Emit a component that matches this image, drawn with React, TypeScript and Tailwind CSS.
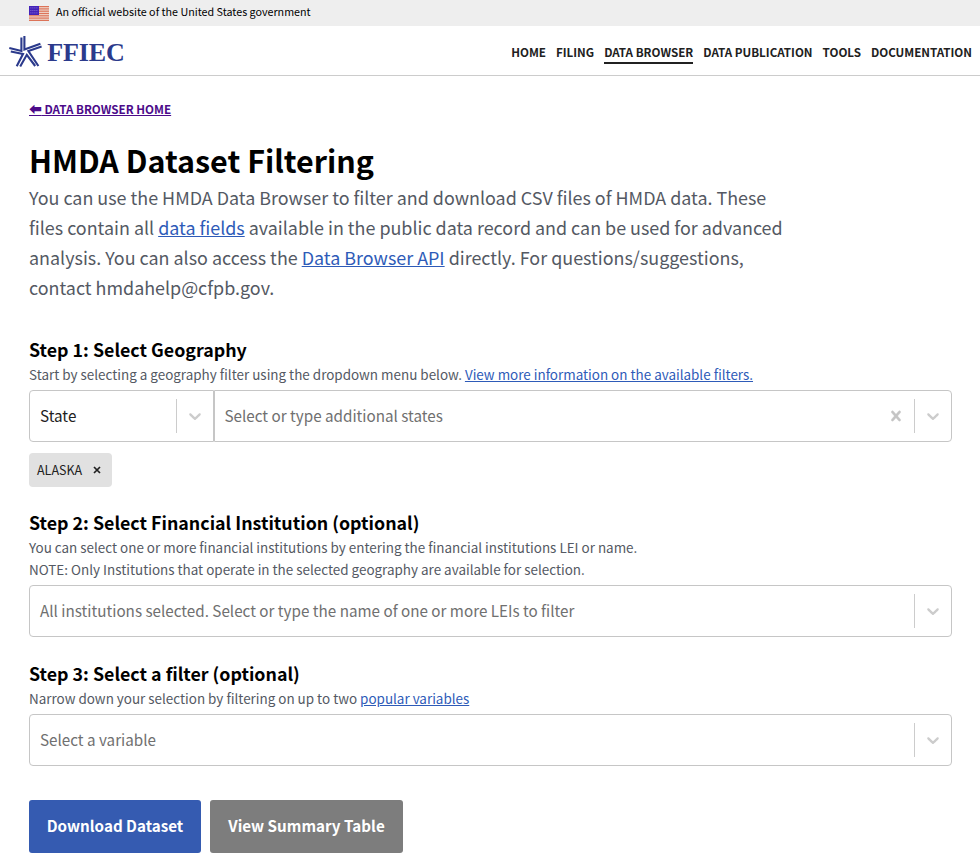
import React from "react";

function Chevron() {
  return (
    <svg width="20" height="20" viewBox="0 0 20 20" fill="#cccccc" aria-hidden="true">
      <path d="M4.516 7.548c0.436-0.446 1.043-0.481 1.576 0l3.908 3.747 3.908-3.747c0.533-0.481 1.141-0.446 1.574 0 0.436 0.445 0.408 1.197 0 1.615-0.406 0.418-4.695 4.502-4.695 4.502-0.217 0.223-0.502 0.335-0.787 0.335s-0.57-0.112-0.789-0.335c0 0-4.287-4.084-4.695-4.502s-0.436-1.17 0-1.615z" />
    </svg>
  );
}

function Clear() {
  return (
    <svg width="20" height="20" viewBox="0 0 20 20" fill="#c4c4c4" stroke="#c4c4c4" strokeWidth="0.4" aria-hidden="true">
      <path d="M14.348 14.849c-0.469 0.469-1.229 0.469-1.697 0l-2.651-3.030-2.651 3.029c-0.469 0.469-1.229 0.469-1.697 0-0.469-0.469-0.469-1.229 0-1.697l2.758-3.15-2.759-3.152c-0.469-0.469-0.469-1.228 0-1.697s1.228-0.469 1.697 0l2.652 3.031 2.651-3.031c0.469-0.469 1.228-0.469 1.697 0s0.469 1.229 0 1.697l-2.758 3.152 2.758 3.15c0.469 0.469 0.469 1.229 0 1.698z" />
    </svg>
  );
}

function Flag() {
  return (
    <svg width="20" height="15" viewBox="0 0 20 15" aria-hidden="true">
      <rect width="20" height="15" fill="#efd9cf" />
      {[0, 2.3, 4.6, 6.9, 9.2, 11.5, 13.8].map((y) => (
        <rect key={y} y={y} width="20" height="1.2" fill="#dc7358" />
      ))}
      <rect width="10" height="9" fill="#4423b8" />
      {[1.5, 4, 6.5].map((y) =>
        [1.5, 3.5, 5.5, 7.5].map((x) => <rect key={`${x}-${y}`} x={x} y={y} width="0.8" height="0.8" fill="#a99be6" />)
      )}
    </svg>
  );
}

function Logo() {
  return (
    <svg width="118" height="35" viewBox="0 0 118 35" aria-label="FFIEC">
      <g fill="none" stroke="#2b3a8c" strokeWidth="2.1">
        <path d="M16.4 3V16.6L32.4 10.8" />
        <path d="M33.6 13.6L20.4 18L30.4 33" />
        <path d="M27.2 33L18.8 21.8L12.2 33.4" />
        <path d="M8.7 33.2L15 21L2.8 18.5" />
        <path d="M1.3 15L13.4 18V4.6" />
      </g>
      <text x="39.3" y="27.5" textLength="77.5" fill="#2b3a8c" className="font-['Liberation_Serif',serif] text-[26px] font-bold">FFIEC</text>
    </svg>
  );
}

interface SelectProps {
  text: string;
  value?: boolean;
  clearable?: boolean;
  className: string;
}

function Select({ text, value, clearable, className }: SelectProps) {
  return (
    <div className={`flex h-[52px] items-center border border-[#c6c6c6] bg-white ${className}`}>
      <span className={`flex-1 pb-0.5 text-[15.22px] leading-6 ${value ? "text-[#212121]" : "text-[#707070]"}`}>{text}</span>
      {clearable && <span className="mr-2"><Clear /></span>}
      <span className="h-[34px] w-px bg-[#cccccc]" />
      <span className="px-2"><Chevron /></span>
    </div>
  );
}

const NAV = ["HOME", "FILING", "DATA BROWSER", "DATA PUBLICATION", "TOOLS", "DOCUMENTATION"];

export default function App() {
  return (
    <div className="h-[865px] w-[980px] overflow-hidden bg-white font-['Noto_Sans_CJK_SC',sans-serif] text-black">
      <div className="flex h-[26px] items-center bg-[#eeeeee] pl-[29px] text-[10.74px]">
        <Flag />
        <span className="-mt-0.5 ml-[7px] leading-4">An official website of the United States government</span>
      </div>
      <header className="flex h-[50px] items-center justify-between border-b border-[#cccccc] pl-2 pr-2">
        <Logo />
        <nav className="mt-1 flex gap-2.5 text-[11.61px] font-bold leading-5 text-[#212121]">
          {NAV.map((n) => (
            <a key={n} className={n === "DATA BROWSER" ? "border-b-2 border-[#212121]" : "border-b-2 border-transparent"}>{n}</a>
          ))}
        </nav>
      </header>
      <main className="pl-[29px] pr-7 pt-[23px]">
        <a className="block h-5 w-fit text-[11.64px] font-bold leading-5 text-[#4c0b8a] underline">
          <span className="text-[12.8px] leading-none">⬅</span> DATA BROWSER HOME
        </a>
        <h1 className="mt-[19px] text-[30.44px] font-bold leading-[44px]">HMDA Dataset Filtering</h1>
        <p className="whitespace-nowrap text-[17.91px] leading-[30px] text-[#545963]">
          You can use the HMDA Data Browser to filter and download CSV files of HMDA data. These<br />
          files contain all <a className="text-[#2e5bb8] underline">data fields</a> available in the public data record and can be used for advanced<br />
          analysis. You can also access the <a className="text-[#2e5bb8] underline">Data Browser API</a> directly. For questions/suggestions,<br />
          contact hmdahelp@cfpb.gov.
        </p>

        <h4 className="mt-[34px] text-[17.82px] font-bold leading-[26px]">Step 1: Select Geography</h4>
        <p className="mt-px text-[13.44px] leading-[22px] text-[#545963]">
          Start by selecting a geography filter using the dropdown menu below.{" "}
          <a className="text-[#2e5bb8] underline">View more information on the available filters.</a>
        </p>
        <div className="mt-[5px] flex">
          <Select text="State" value className="w-[185px] rounded-l pl-2.5" />
          <Select text="Select or type additional states" clearable className="flex-1 rounded-r pl-[9.5px]" />
        </div>
        <div className="mt-[11px] flex h-[34px] w-[83px] items-center rounded-sm bg-[#e1e1e1] pl-2 text-[12.53px] text-[#212121]">
          <span>ALASKA</span>
          <svg className="ml-[11px]" width="8" height="8" viewBox="0 0 8 8" stroke="#212121" strokeWidth="1.7"><path d="M1 1L7 7M7 1L1 7" /></svg>
        </div>

        <h4 className="mt-[22px] text-[17.82px] font-bold leading-[26px]">Step 2: Select Financial Institution (optional)</h4>
        <p className="mt-px text-[13.44px] leading-[22px] text-[#545963]">
          You can select one or more financial institutions by entering the financial institutions LEI or name.<br />
          NOTE: Only Institutions that operate in the selected geography are available for selection.
        </p>
        <Select text="All institutions selected. Select or type the name of one or more LEIs to filter" className="mt-[5px] rounded pl-2.5" />

        <h4 className="mt-[23px] text-[17.82px] font-bold leading-[26px]">Step 3: Select a filter (optional)</h4>
        <p className="mt-px text-[13.44px] leading-[22px] text-[#545963]">
          Narrow down your selection by filtering on up to two <a className="text-[#2e5bb8] underline">popular variables</a>
        </p>
        <Select text="Select a variable" className="mt-[5px] rounded pl-2.5" />

        <div className="mt-[34px] flex gap-[9px] text-[15.2px] font-bold text-white">
          <button className="h-[53px] w-[172px] rounded-[3px] bg-[#355bb1] pb-0.5">Download Dataset</button>
          <button className="h-[53px] w-[193px] rounded-[3px] bg-[#7d7d7d] pb-0.5">View Summary Table</button>
        </div>
      </main>
    </div>
  );
}
